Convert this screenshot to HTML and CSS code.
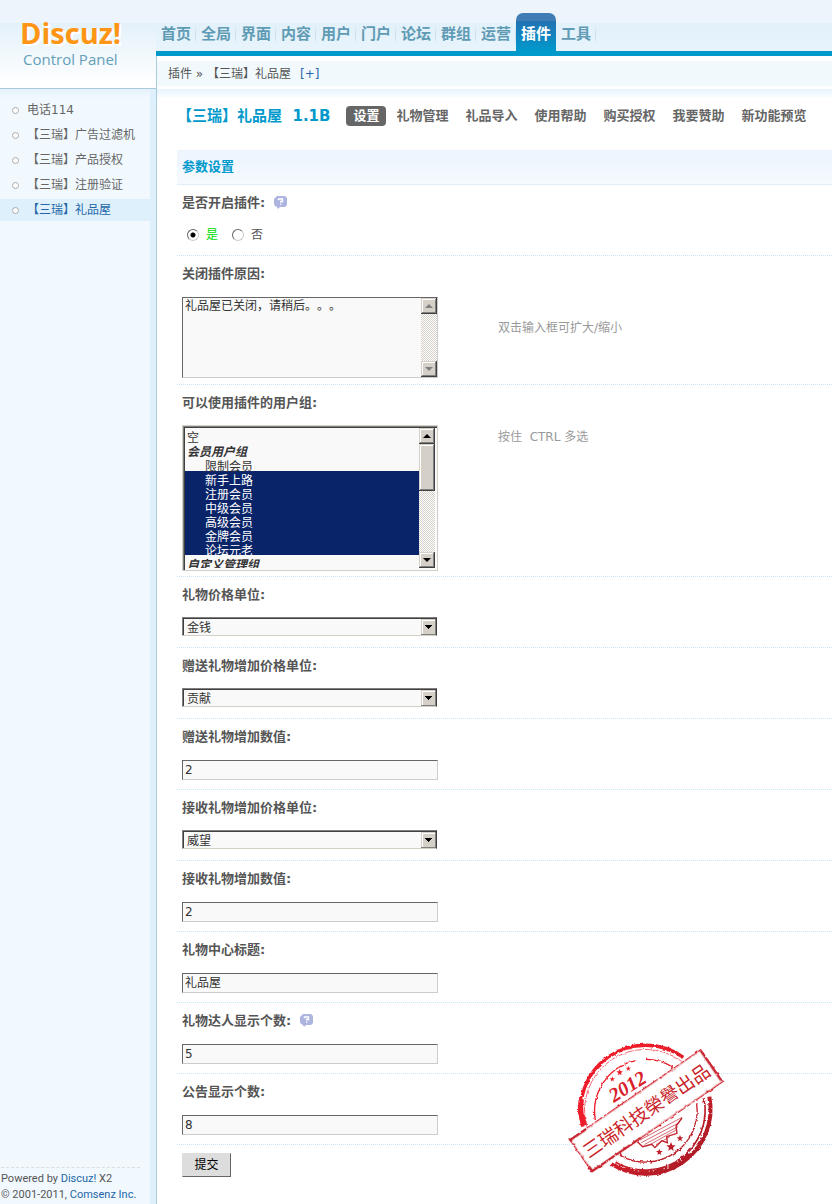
FILE: index.html
```html
<!DOCTYPE html>
<html lang="zh-CN">
<head>
    <meta charset="UTF-8">
    <meta name="viewport" content="width=device-width, initial-scale=1.0">
    <title>Discuz! Control Panel</title>
    <link rel="stylesheet" href="styles.css">
</head>
<body>
    <div class="header">
        <div class="logo">
            <div class="logo-name">Discuz!</div>
            <div class="logo-sub">Control Panel</div>
        </div>
        <div class="header-main">
            <nav class="nav">
                <a href="#">首页</a>
                <a href="#">全局</a>
                <a href="#">界面</a>
                <a href="#">内容</a>
                <a href="#">用户</a>
                <a href="#">门户</a>
                <a href="#">论坛</a>
                <a href="#">群组</a>
                <a href="#">运营</a>
                <a href="#" class="active">插件</a>
                <a href="#">工具</a>
            </nav>
            <div class="crumb"><span>插件 » 【三瑞】礼品屋</span><a href="#">[+]</a></div>
        </div>
    </div>

    <div class="main">
        <div class="sidebar">
            <ul class="menu">
                <li><a href="#">电话114</a></li>
                <li><a href="#">【三瑞】广告过滤机</a></li>
                <li><a href="#">【三瑞】产品授权</a></li>
                <li><a href="#">【三瑞】注册验证</a></li>
                <li class="active"><a href="#">【三瑞】礼品屋</a></li>
            </ul>
            <div class="copyright">
                <p>Powered by <a href="#">Discuz!</a> X2</p>
                <p>© 2001-2011, <a href="#">Comsenz Inc.</a></p>
            </div>
        </div>

        <div class="content">
            <div class="title-bar">
                <h1>【三瑞】礼品屋&nbsp; 1.1B</h1>
                <div class="tabs">
                    <a href="#" class="active">设置</a>
                    <a href="#">礼物管理</a>
                    <a href="#">礼品导入</a>
                    <a href="#">使用帮助</a>
                    <a href="#">购买授权</a>
                    <a href="#">我要赞助</a>
                    <a href="#">新功能预览</a>
                </div>
            </div>

            <form class="settings">
                <h2>参数设置</h2>

                <div class="row">
                    <div class="label">是否开启插件:
                        <svg class="help" viewBox="0 0 14 14"><path d="M3 0h8l2 2v7l-2 2H6l-2 2-1-2-2-1-1-2V3z" fill="#adb4e0"/><path d="M4.5 4.2V3h4v2.500H6.700v1M6.700 7.500v1.300" fill="none" stroke="#fff" stroke-width="1.400"/></svg>
                    </div>
                    <div class="radios">
                        <label class="on"><input type="radio" name="open" checked>是</label>
                        <label><input type="radio" name="open">否</label>
                    </div>
                </div>

                <div class="row">
                    <label class="label" for="reason">关闭插件原因:</label>
                    <div class="field">
                        <div class="scrollbox text-box">
                            <textarea id="reason">礼品屋已关闭，请稍后。。。</textarea>
                            <div class="scrollbar disabled">
                                <span class="arrow up"></span>
                                <span class="arrow down"></span>
                            </div>
                        </div>
                        <p class="hint"><br>双击输入框可扩大/缩小</p>
                    </div>
                </div>

                <div class="row">
                    <label class="label" for="groups">可以使用插件的用户组:</label>
                    <div class="field">
                        <div class="scrollbox list-box">
                            <select id="groups" class="list" multiple size="10">
                                <option>空</option>
                                <optgroup label="会员用户组">
                                    <option>限制会员</option>
                                    <option selected>新手上路</option>
                                    <option selected>注册会员</option>
                                    <option selected>中级会员</option>
                                    <option selected>高级会员</option>
                                    <option selected>金牌会员</option>
                                    <option selected>论坛元老</option>
                                </optgroup>
                                <optgroup label="自定义管理组"></optgroup>
                            </select>
                            <div class="scrollbar">
                                <span class="arrow up"></span>
                                <span class="thumb"></span>
                                <span class="arrow down"></span>
                            </div>
                        </div>
                        <p class="hint">按住&nbsp; CTRL 多选</p>
                    </div>
                </div>

                <div class="row">
                    <label class="label" for="unit">礼物价格单位:</label>
                    <div class="field">
                        <select id="unit" class="drop"><option>金钱</option></select>
                    </div>
                </div>

                <div class="row">
                    <label class="label" for="sendUnit">赠送礼物增加价格单位:</label>
                    <div class="field">
                        <select id="sendUnit" class="drop"><option>贡献</option></select>
                    </div>
                </div>

                <div class="row">
                    <label class="label" for="sendNum">赠送礼物增加数值:</label>
                    <div class="field"><input type="text" id="sendNum" value="2"></div>
                </div>

                <div class="row">
                    <label class="label" for="getUnit">接收礼物增加价格单位:</label>
                    <div class="field">
                        <select id="getUnit" class="drop"><option>威望</option></select>
                    </div>
                </div>

                <div class="row">
                    <label class="label" for="getNum">接收礼物增加数值:</label>
                    <div class="field"><input type="text" id="getNum" value="2"></div>
                </div>

                <div class="row">
                    <label class="label" for="center">礼物中心标题:</label>
                    <div class="field"><input type="text" id="center" value="礼品屋"></div>
                </div>

                <div class="row">
                    <label class="label" for="topNum">礼物达人显示个数:
                        <svg class="help" viewBox="0 0 14 14"><path d="M3 0h8l2 2v7l-2 2H6l-2 2-1-2-2-1-1-2V3z" fill="#adb4e0"/><path d="M4.5 4.2V3h4v2.500H6.700v1M6.700 7.500v1.300" fill="none" stroke="#fff" stroke-width="1.400"/></svg>
                    </label>
                    <div class="field"><input type="text" id="topNum" value="5"></div>
                </div>

                <div class="row">
                    <label class="label" for="noticeNum">公告显示个数:</label>
                    <div class="field"><input type="text" id="noticeNum" value="8"></div>
                </div>

                <button type="submit" class="submit-btn">提交</button>

                <svg class="stamp" viewBox="0 0 570 480">
                    <defs>
                        <linearGradient id="ink" gradientUnits="userSpaceOnUse" x1="90" y1="50" x2="480" y2="430">
                            <stop offset="0.3" stop-color="#ee1f29"/>
                            <stop offset="1" stop-color="#a01e28"/>
                        </linearGradient>
                        <filter id="rough" x="-5%" y="-5%" width="110%" height="110%">
                            <feTurbulence type="fractalNoise" baseFrequency="0.09" numOctaves="3" seed="4"/>
                            <feDisplacementMap in="SourceGraphic" scale="9" xChannelSelector="R" yChannelSelector="G"/>
                        </filter>
                    </defs>
                    <circle cx="288" cy="240" r="192" fill="#fff"/>
                    <g fill="none" stroke="url(#ink)" filter="url(#rough)">
                        <path d="M98 290A195 195 0 0 1 400 82" stroke-width="10"/>
                        <path d="M94 208q-8 40 10 78" stroke-width="16"/>
                        <path d="M110 290A183 183 0 0 1 395 94" stroke-width="2"/>
                        <path d="M478 200A194 194 0 0 1 185 402" stroke-width="12"/>
                        <path d="M462 205A180 180 0 0 1 195 396" stroke-width="5"/>
                        <path d="M420 372A190 190 0 0 1 225 418" stroke-width="14" stroke-dasharray="30 4 9 3"/>
                        <path d="M136 270A155 155 0 0 1 258 92M288 88A155 155 0 0 1 370 112" stroke-width="4"/>
                        <path d="M440 220A155 155 0 0 1 210 376" stroke-width="4"/>
                    </g>
                    <g fill="url(#ink)">
                        <path d="M187 139 189 145 195 145 190 149 192 155 187 151 182 155 184 149 179 145 185 145z"/>
                        <path d="M209 117 212 124 219 124 213 129 215 136 209 132 203 136 205 129 199 124 206 124z"/>
                        <path d="M235 107 237 113 243 113 238 117 240 123 235 119 230 123 232 117 227 113 233 113z"/>
                        <path d="M328 356 331 363 338 363 332 368 334 375 328 371 322 375 324 368 318 363 325 363z"/>
                        <path d="M363 336 367 346 377 346 369 353 371 363 363 357 355 363 357 353 349 346 359 346z"/>
                        <path d="M390 315 393 322 400 322 394 327 396 334 390 330 384 334 386 327 380 322 387 322z"/>
                    </g>
                    <g fill="none" stroke="#c01f2b" stroke-width="4">
                        <path d="M262 335 278 350 305 343 315 353 335 332 352 338 350 320 381 310 378 288 396 264"/>
                        <path d="M270 330 396 262M274 338 388 278M284 343 384 290M300 344 378 300M318 344 360 320" stroke-width="2"/>
                    </g>
                    <text class="stamp-year" transform="translate(192 218) rotate(-32)">2012</text>
                    <g transform="translate(289 242) rotate(-34.500)">
                        <rect x="-238" y="-58" width="476" height="116" fill="#fff" stroke="#d41f2a" stroke-width="4" filter="url(#rough)"/>
                        <path d="M-236 40V58H-60M-238-50V-56H-180M236-56V54" fill="none" stroke="#c41f2a" stroke-width="6" filter="url(#rough)"/>
                        <text class="stamp-text" x="0" y="21" text-anchor="middle">三瑞科技榮譽出品</text>
                    </g>
                </svg>
            </form>
        </div>
    </div>
</body>
</html>
```
FILE: styles.css
```css
*, *::before {
    box-sizing: border-box;
}
body {
    margin: 0;
    min-height: 100vh;
    display: flex;
    flex-direction: column;
    font: 12px/20px "DejaVu Sans", "Noto Sans CJK SC", sans-serif;
    text-spacing-trim: space-all;
    color: #555;
    background: #fff;
}
a {
    color: #2366a8;
    text-decoration: none;
}
h1, h2, p, ul {
    margin: 0;
    padding: 0;
}

/* header */
.header {
    display: grid;
    grid-template-columns: 156px 1fr;
    height: 89px;
    border-bottom: 1px solid #a9cbda;
    background: linear-gradient(#edf4fc 23px, #e3f1fa 23px, #fff 84px);
}
.logo {
    padding: 16px 0 0 20px;
    font-family: "Open Sans", sans-serif;
}
.logo-name {
    font-size: 29px;
    line-height: 34px;
    font-weight: bold;
    color: #ff9514;
    text-shadow: 1px 1px 0 #fff, 2px 2px 1px #fff;
}
.logo-sub {
    padding-left: 3px;
    font-size: 15px;
    line-height: 18px;
    color: #639fb8;
}
.header-main {
    display: flex;
    flex-direction: column;
}
.nav {
    display: flex;
    height: 56px;
    padding-top: 13px;
    border-bottom: 5px solid #0099cc;
    background: linear-gradient(#edf4fc 23px, #e2f1fa 23px, #e8f4fc);
}
.nav a {
    width: 40px;
    text-align: center;
    font-size: 15px;
    line-height: 42px;
    font-weight: bold;
    color: #5f9bb4;
    background: linear-gradient(transparent, #c4dce8, transparent) right 12px / 1px 20px no-repeat;
}
.nav .active {
    color: #fff;
    border-radius: 7px 7px 0 0;
    background: linear-gradient(#407cb6 8px, #2272b2 8px, #0099cc);
}
.crumb {
    flex: 1;
    display: flex;
    gap: 9px;
    padding-left: 11px;
    line-height: 36px;
    border-left: 1px solid #a9cbda;
    background: linear-gradient(#fff 5px, #f1f9fd 5px, #f1f9fd 30px, #fff 30px);
}

/* sidebar */
.main {
    flex: 1;
    display: grid;
    grid-template-columns: 156px 1fr;
}
.sidebar {
    display: flex;
    flex-direction: column;
    justify-content: space-between;
    border-right: 6px solid #def0fb;
    background: linear-gradient(#e6f2fc, #f1f9fe 10px);
}
.menu {
    padding-top: 10px;
    list-style: none;
}
.menu li {
    display: flex;
    align-items: center;
    gap: 8px;
    height: 22px;
    margin-bottom: 3px;
    padding-left: 12px;
}
.menu li::before {
    content: "";
    width: 7px;
    height: 7px;
    border: 1px solid #aaa;
    border-radius: 50%;
    background: #fff;
}
.menu a {
    color: #666;
}
.menu .active {
    background: #def0fb;
}
.menu .active a {
    color: #2366a8;
}
.copyright {
    margin: 0 10px 1px 1px;
    padding-top: 3px;
    border-top: 1px dashed #ddd;
    font-family: Roboto, sans-serif;
    font-size: 11px;
    line-height: 16px;
    white-space: nowrap;
}

/* content */
.content {
    padding-left: 20px;
    border-left: 1px solid #a9cbda;
    background: linear-gradient(#e6f3fe, #fff 10px);
}
.title-bar {
    display: flex;
    align-items: center;
    height: 61px;
    padding-bottom: 7px;
    white-space: nowrap;
}
h1 {
    margin-right: 16px;
    font-size: 15px;
    color: #0099cc;
}
.tabs {
    display: flex;
    gap: 3px;
}
.tabs a {
    padding: 0 7px;
    font-size: 13px;
    font-weight: bold;
    color: #666;
}
.tabs .active {
    color: #fff;
    border-radius: 4px;
    background: #666;
}
.settings {
    position: relative;
}
h2 {
    height: 35px;
    padding-left: 5px;
    font-size: 13px;
    line-height: 34px;
    color: #0099cc;
    border-bottom: 1px dotted #cfe6f5;
    background: linear-gradient(#ecf5fd, #f0f6fe 12px, #f4fafe);
}
.row {
    min-height: 71px;
    padding: 8px 5px 5px;
    border-bottom: 1px dotted #c4e6f8;
}
.label {
    display: flex;
    align-items: center;
    gap: 9px;
    margin-bottom: 12px;
    font-size: 13px;
    font-weight: bold;
}
.help {
    width: 14px;
    height: 14px;
}
.field {
    display: flex;
    gap: 60px;
}
.hint {
    padding-top: 2px;
    color: #999;
}
.radios {
    display: flex;
    gap: 14px;
    padding-left: 5px;
}
.radios label {
    display: flex;
    align-items: center;
    gap: 7px;
}
.radios .on {
    color: #00dd00;
}
input[type="radio"] {
    appearance: none;
    width: 12px;
    height: 12px;
    margin: 0;
    border: 1px solid;
    border-color: #666 #ccc #ccc #666;
    border-radius: 50%;
    background: #fff;
}
input[type="radio"]:checked {
    background: radial-gradient(#000 2px, #fff 3px);
}
input[type="text"], .text-box {
    width: 256px;
    margin: 1px 0;
    border: 1px solid;
    border-color: #666 #ccc #ccc #666;
    border-radius: 0;
    background: #f9f9f9;
}
input[type="text"] {
    height: 20px;
    padding: 0 2px;
    font: inherit;
    color: #333;
}
select {
    appearance: none;
    font: inherit;
    color: #333;
    border-radius: 0;
}
.drop {
    width: 255px;
    height: 19px;
    padding: 2px 0 0 4px;
    line-height: 16px;
    border: 1px solid;
    border-color: #808080 #404040 #d4d0c8 #808080;
    box-shadow: inset 1px 1px 0 #404040;
    background: #f9f9f9 url("data:image/svg+xml,%3Csvg xmlns='http://www.w3.org/2000/svg' width='15' height='16' shape-rendering='crispEdges'%3E%3Cpath d='M0 0h15v16H0z' fill='%23d4d0c8'/%3E%3Cpath d='M1.500 15V1.500H14' fill='none' stroke='%23fff'/%3E%3Cpath d='M14.500 0v15.500H0' fill='none' stroke='%23808080'/%3E%3Cpath d='M4 6h7v1h-1v1H9v1H8v1H7V9H6V8H5V7H4z'/%3E%3C/svg%3E") right 0 top 1px no-repeat;
}

/* boxes with a classic scrollbar */
.scrollbox {
    display: flex;
}
.text-box {
    height: 81px;
}
.list-box {
    width: 256px;
    height: 146px;
    padding: 2px;
    border: 1px solid #d4d0c8;
    box-shadow: inset 1px 1px 0 #808080, inset 2px 2px 0 #404040;
    background: #f9f9f9;
}
textarea {
    flex: 1;
    min-width: 0;
    margin: 0;
    padding: 0 2px;
    font: inherit;
    line-height: 16px;
    color: #333;
    border: 0;
    background: none;
    resize: none;
}
.list {
    flex: 1;
    height: 140px;
    padding: 0;
    border: 0;
    background: none;
    overflow: hidden;
}
.list option {
    min-height: 14px;
    height: 14px;
    padding: 0 2px;
    line-height: 11px;
}
.list optgroup {
    padding: 0;
    font-style: italic;
    line-height: 11px;
}
.list optgroup option {
    padding-left: 20px;
    font-style: normal;
}
.list optgroup option:first-of-type {
    margin-top: -3px;
}
.list option:checked {
    -webkit-text-fill-color: #fff;
    background: linear-gradient(#0a246a, #0a246a);
}
.scrollbar {
    display: flex;
    flex-direction: column;
    width: 16px;
    background: repeating-conic-gradient(#d4d0c8 0 25%, #fff 0 50%) 0 0 / 2px 2px;
}
.arrow, .thumb {
    display: flex;
    align-items: center;
    justify-content: center;
    height: 16px;
    background: #d4d0c8;
    box-shadow: inset -1px -1px 0 #404040, inset 1px 1px 0 #d4d0c8, inset -2px -2px 0 #808080, inset 2px 2px 0 #fff;
}
.thumb {
    height: 47px;
}
.arrow::before {
    content: "";
    width: 8px;
    height: 4px;
    background: #000;
}
.up::before {
    clip-path: polygon(50% 0, 100% 100%, 0 100%);
}
.down::before {
    clip-path: polygon(0 0, 100% 0, 50% 100%);
}
.down {
    margin-top: auto;
}
.disabled .arrow::before {
    background: #808080;
}

.submit-btn {
    margin: 8px 5px 27px;
    width: 49px;
    height: 24px;
    padding: 0;
    font: inherit;
    color: #000;
    border: 1px solid;
    border-color: #ddd #666 #666 #ddd;
    background: #ddd;
}
.stamp {
    position: absolute;
    right: 92px;
    bottom: 14px;
    width: 190px;
    height: 160px;
}
.stamp-year {
    font: italic bold 60px "Liberation Serif", serif;
    fill: #d8202b;
}
.stamp-text {
    font: 56px "Noto Sans CJK TC", sans-serif;
    fill: #c91f2a;
}
```
